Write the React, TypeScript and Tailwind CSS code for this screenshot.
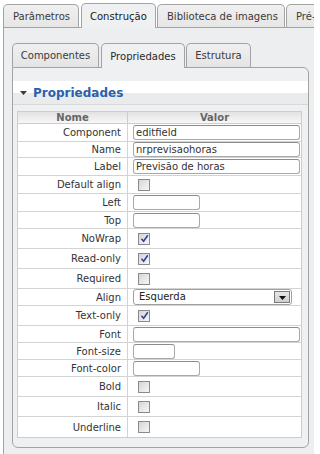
import React from "react";

type Row =
  | { label: string; kind: "text"; value?: string; w: number; h: number }
  | { label: string; kind: "check"; checked: boolean; h: number }
  | { label: string; kind: "select"; value: string; h: number };

const rows: Row[] = [
  { label: "Component", kind: "text", value: "editfield", w: 167, h: 18 },
  { label: "Name", kind: "text", value: "nrprevisaohoras", w: 167, h: 16 },
  { label: "Label", kind: "text", value: "Previsão de horas", w: 167, h: 18 },
  { label: "Default align", kind: "check", checked: false, h: 18 },
  { label: "Left", kind: "text", w: 67, h: 18 },
  { label: "Top", kind: "text", w: 67, h: 17 },
  { label: "NoWrap", kind: "check", checked: true, h: 20 },
  { label: "Read-only", kind: "check", checked: true, h: 20 },
  { label: "Required", kind: "check", checked: false, h: 20 },
  { label: "Align", kind: "select", value: "Esquerda", h: 17 },
  { label: "Text-only", kind: "check", checked: true, h: 20 },
  { label: "Font", kind: "text", w: 167, h: 17 },
  { label: "Font-size", kind: "text", w: 42, h: 17 },
  { label: "Font-color", kind: "text", w: 67, h: 17 },
  { label: "Bold", kind: "check", checked: false, h: 20 },
  { label: "Italic", kind: "check", checked: false, h: 20 },
  { label: "Underline", kind: "check", checked: false, h: 20 },
];

function TopTab({ label, active, w }: { label: string; active?: boolean; w: number }) {
  return (
    <div
      style={{ width: w }}
      className={
        active
          ? "relative z-10 -mb-px flex h-[25px] shrink-0 items-center rounded-t-[5px] border border-b-0 border-[#a3a3a3] bg-[#eef0f1] pl-[8px] text-[#1a1a1a]"
          : "flex h-[23px] shrink-0 items-center overflow-hidden rounded-t-[5px] border border-b-0 border-[#a3a3a3] bg-[linear-gradient(to_bottom,#f0f0f0,#e6e6e6)] pl-[9px] text-[#3a3a3a]"
      }
    >
      <span className="whitespace-nowrap">{label}</span>
    </div>
  );
}

function InnerTab({ label, active, w }: { label: string; active?: boolean; w: number }) {
  return (
    <div
      style={{ width: w }}
      className={
        active
          ? "relative z-10 -mb-px flex h-[25px] shrink-0 items-center justify-center rounded-t-[5px] border border-b-0 border-[#a3a3a3] bg-[#eff0f1] text-[#2a2a2a]"
          : "flex h-[24px] shrink-0 items-center justify-center rounded-t-[5px] border border-b-0 border-[#a3a3a3] bg-[linear-gradient(to_bottom,#f0f0f0,#e4e4e4)] text-[#3a3a3a]"
      }
    >
      <span className="whitespace-nowrap">{label}</span>
    </div>
  );
}

function Checkbox({ checked }: { checked: boolean }) {
  return (
    <div className="ml-[10px] flex h-[12px] w-[12px] items-center justify-center border border-[#8a8a8a] bg-[linear-gradient(135deg,#d6d6d6,#f6f6f6)]">
      {checked && (
        <svg width="9" height="9" viewBox="0 0 9 9">
          <path d="M1.5 4.8 L3.6 7.2 L7.8 1.2" fill="none" stroke="#2c3f9e" strokeWidth="1.5" />
        </svg>
      )}
    </div>
  );
}

function TextInput({ value, w }: { value?: string; w: number }) {
  return (
    <div
      style={{ width: w }}
      className="ml-[5px] flex h-[15px] items-center rounded-[3px] border border-[#a9a9a9] border-t-[#8c8c8c] bg-white pl-[2px] text-[#333]"
    >
      <span className="whitespace-nowrap leading-none">{value ?? ""}</span>
    </div>
  );
}

function Select({ value }: { value: string }) {
  return (
    <div className="ml-[5px] flex h-[16px] w-[159px] items-center justify-between rounded-[3px] border border-[#a0a0a0] bg-white pl-[5px] pr-[1px] text-[#222]">
      <span className="whitespace-nowrap leading-none">{value}</span>
      <div className="flex h-[12px] w-[16px] items-end justify-center border border-[#7a7a7a] bg-[linear-gradient(to_bottom,#e8e8e8,#cfcfcf)] pb-[2px]">
        <svg width="7" height="4" viewBox="0 0 7 4">
          <path d="M0 0 L7 0 L3.5 4 Z" fill="#111" />
        </svg>
      </div>
    </div>
  );
}

export default function App() {
  return (
    <div className="flex h-[454px] w-[314px] flex-col overflow-hidden bg-white font-['DejaVu_Sans',Verdana,sans-serif] text-[10px]">
      {/* top tabs */}
      <div className="flex items-end pl-[3px] pt-[3px]">
        <TopTab label="Parâmetros" w={76} />
        <div className="w-[2px] shrink-0" />
        <TopTab label="Construção" active w={75} />
        <div className="w-[1px] shrink-0" />
        <TopTab label="Biblioteca de imagens" w={128} />
        <div className="w-[1px] shrink-0" />
        <TopTab label="Pré-" w={40} />
      </div>

      {/* outer panel */}
      <div className="ml-[3px] flex w-[360px] flex-1 flex-col border-l border-t border-[#a3a3a3] bg-[#eceef0] pl-[8px] pt-[15px]">
        {/* inner tabs */}
        <div className="flex items-end">
          <InnerTab label="Componentes" w={87} />
          <div className="w-[2px] shrink-0" />
          <InnerTab label="Propriedades" active w={84} />
          <div className="w-[1px] shrink-0" />
          <InnerTab label="Estrutura" w={65} />
        </div>

        {/* inner panel */}
        <div className="flex w-[297px] flex-col rounded-b-[6px] rounded-tr-[6px] border border-[#a3a3a3] bg-[#eff0f1] pb-[9px] pt-[13px]">
          {/* header band */}
          <div className="flex h-[24px] items-center border-b border-[#d6d8d9] bg-[linear-gradient(to_bottom,#ffffff_50%,#eaecec_50%)] pl-[7px]">
            <svg width="7" height="4" viewBox="0 0 7 4" className="mr-[6px]">
              <path d="M0 0 L7 0 L3.5 4 Z" fill="#3a3a3a" />
            </svg>
            <span className="text-[12px] font-bold text-[#2a5fae]">Propriedades</span>
          </div>

          {/* table */}
          <div className="ml-[4px] mt-[6px] w-[285px] border border-[#cdcdcd] bg-white">
            <div className="grid h-[12px] grid-cols-[110px_1fr] border-b border-[#cdcdcd] bg-[linear-gradient(to_bottom,#e2e2e2,#f7f7f7)] font-bold text-[#666] leading-[11px]">
              <div className="border-r border-[#cdcdcd] text-center">Nome</div>
              <div className="text-center">Valor</div>
            </div>
            {rows.map((r, i) => (
              <div
                key={r.label}
                style={{ height: r.h }}
                className={
                  i === rows.length - 1
                    ? "grid grid-cols-[110px_1fr]"
                    : "grid grid-cols-[110px_1fr] border-b border-[#d3d3d3]"
                }
              >
                <div className="flex items-center justify-end border-r border-[#d3d3d3] pr-[6px] text-[#333]">
                  <span className="whitespace-nowrap">{r.label}</span>
                </div>
                <div className="flex items-center">
                  {r.kind === "text" && <TextInput value={r.value} w={r.w} />}
                  {r.kind === "check" && <Checkbox checked={r.checked} />}
                  {r.kind === "select" && <Select value={r.value} />}
                </div>
              </div>
            ))}
          </div>
        </div>
      </div>
    </div>
  );
}
